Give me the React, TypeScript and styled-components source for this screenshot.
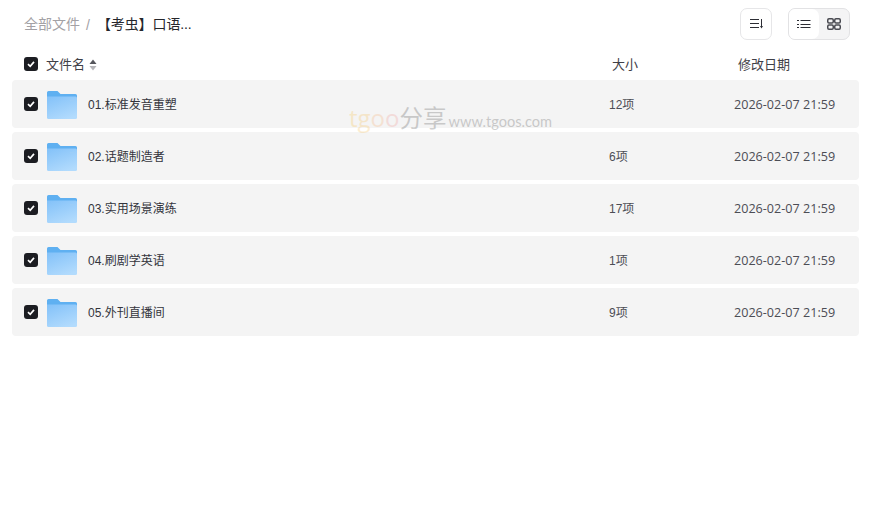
import styled, { createGlobalStyle } from "styled-components";

const FILES = [
    { name: "01.标准发音重塑", count: "12项" },
    { name: "02.话题制造者", count: "6项" },
    { name: "03.实用场景演练", count: "17项" },
    { name: "04.刷剧学英语", count: "1项" },
    { name: "05.外刊直播间", count: "9项" },
];
const MODIFIED = "2026-02-07 21:59";

const Check = () => (
    <CheckBox>
        <svg width="10" height="10" viewBox="0 0 10 10" fill="none">
            <path d="M2 5.2 4.2 7.3 8 2.9" stroke="#fff" strokeWidth="1.7" />
        </svg>
    </CheckBox>
);

const Folder = () => (
    <FolderIcon width="30" height="28" viewBox="0 0 30 28">
        <defs>
            <linearGradient id="folderFront" x1="0.2" y1="0" x2="0.7" y2="1">
                <stop offset="0" stopColor="#86c3f9" />
                <stop offset="1" stopColor="#b2dbfd" />
            </linearGradient>
        </defs>
        <path d="M0 1.5Q0 0 1.5 0H10.5L13.5 3H28.5Q30 3 30 4.5V10H0Z" fill="#5fb0f1" />
        <path d="M0 5.5H28.5Q30 5.5 30 7V26.5Q30 28 28.5 28H1.5Q0 28 0 26.5Z" fill="url(#folderFront)" />
        <rect x="23" y="9" width="4" height="1.5" fill="#9ccdf8" />
    </FolderIcon>
);

const App = () => {
    return (
        <Page>
            <GlobalStyle />
            <TopBar>
                <Crumbs>
                    <CrumbLink>全部文件</CrumbLink>
                    <CrumbSlash>/</CrumbSlash>
                    <CrumbCurrent>【考虫】口语...</CrumbCurrent>
                </Crumbs>
                <Tools>
                    <SortButton>
                        <svg width="14" height="12" viewBox="0 0 14 12" fill="none" stroke="#2c2d34" strokeWidth="1">
                            <path d="M1 1.5H10M1 5.5H10M1 9.5H10" />
                            <path d="M12.5 1V8" />
                            <path d="M11 8H14L12.5 10.5Z" fill="#2c2d34" stroke="none" />
                        </svg>
                    </SortButton>
                    <ViewSwitch>
                        <ViewOption $active>
                            <svg width="14" height="10" viewBox="0 0 14 10" fill="none" stroke="#2c2d34" strokeWidth="1">
                                <path d="M3.5 1.5H13.5M3.5 5.5H13.5M3.5 8.5H13.5" />
                                <path d="M0 1.5H2M0 5.5H2M0 8.5H2" />
                            </svg>
                        </ViewOption>
                        <ViewOption>
                            <svg width="14" height="12" viewBox="0 0 14 12" fill="none" stroke="#4a4b52" strokeWidth="1.5">
                                <rect x="0.75" y="0.75" width="5.5" height="4.3" rx="1.2" />
                                <rect x="7.75" y="0.75" width="5.5" height="4.3" rx="1.2" />
                                <rect x="0.75" y="6.95" width="5.5" height="4.3" rx="1.2" />
                                <rect x="7.75" y="6.95" width="5.5" height="4.3" rx="1.2" />
                            </svg>
                        </ViewOption>
                    </ViewSwitch>
                </Tools>
            </TopBar>

            <HeaderRow>
                <NameHead>
                    <Check />
                    <NameLabel>文件名</NameLabel>
                    <SortCaret>
                        <svg width="8" height="12" viewBox="0 0 8 12">
                            <path d="M4 0.5 7.5 5H0.5Z" fill="#55565c" />
                            <path d="M4 11.5 0.5 7H7.5Z" fill="#b4b4b8" />
                        </svg>
                    </SortCaret>
                </NameHead>
                <HeadLabel>大小</HeadLabel>
                <HeadLabel>修改日期</HeadLabel>
            </HeaderRow>

            <List>
                {FILES.map((file) => (
                    <FileRow key={file.name}>
                        <NameCell>
                            <Check />
                            <Folder />
                            <FileName>{file.name}</FileName>
                        </NameCell>
                        <Meta>{file.count}</Meta>
                        <DateText>{MODIFIED}</DateText>
                    </FileRow>
                ))}
                <Watermark>
                    <MarkBrand>
                        <i>t</i>
                        <i>g</i>
                        <i>o</i>
                        <i>o</i>
                    </MarkBrand>
                    <MarkCn>分享</MarkCn>
                    <MarkUrl>www.tgoos.com</MarkUrl>
                </Watermark>
            </List>
        </Page>
    );
};

const GlobalStyle = createGlobalStyle`
    html, body {
        margin: 0;
        background: #fff;
    }
    body {
        font-family: "Liberation Sans", "Noto Sans CJK SC", sans-serif;
        color: #33343c;
    }
`;
const Page = styled.div`
    width: 874px;
    height: 514px;
    overflow: hidden;
    box-sizing: border-box;
    padding: 0 15px 0 12px;
`;
const TopBar = styled.div`
    height: 48px;
    display: flex;
    align-items: center;
    justify-content: space-between;
    padding: 0 9px 0 12px;
`;
const Crumbs = styled.div`
    display: flex;
    align-items: center;
    font-size: 14px;
    line-height: 20px;
`;
const CrumbLink = styled.span`
    color: #a3a1a5;
`;
const CrumbSlash = styled.span`
    color: #a3a1a5;
    margin: 2px 7px 0 6px;
`;
const CrumbCurrent = styled.span`
    color: #25262b;
    letter-spacing: -0.1px;
`;
const Tools = styled.div`
    display: flex;
    align-items: center;
    gap: 16px;
`;
const SortButton = styled.div`
    width: 30px;
    height: 30px;
    border: 1px solid #e6e6e8;
    border-radius: 7px;
    display: flex;
    align-items: center;
    justify-content: center;
`;
const ViewSwitch = styled.div`
    display: flex;
    height: 30px;
    border: 1px solid #e2e2e4;
    border-radius: 7px;
    overflow: hidden;
    background: #f4f4f5;
`;
const ViewOption = styled.div<{ $active?: boolean }>`
    width: 30px;
    display: flex;
    align-items: center;
    justify-content: center;
    background: ${(props) => (props.$active ? "#fff" : "transparent")};
    border-radius: ${(props) => (props.$active ? "0 7px 7px 0" : "0")};
`;
const HeaderRow = styled.div`
    height: 32px;
    display: grid;
    grid-template-columns: 600px 126px 1fr;
    align-items: center;
`;
const NameHead = styled.div`
    display: flex;
    align-items: center;
    padding-left: 12px;
`;
const HeadLabel = styled.span`
    color: #3f4047;
    font-size: 13px;
    line-height: 18px;
    margin-top: 2px;
`;
const NameLabel = styled(HeadLabel)`
    margin-left: 8px;
`;
const SortCaret = styled.span`
    display: flex;
    margin: 2px 0 0 4px;
`;
const CheckBox = styled.span`
    width: 14px;
    height: 14px;
    flex: none;
    border-radius: 3px;
    background: #1c1d22;
    display: flex;
    align-items: center;
    justify-content: center;
`;
const List = styled.div`
    position: relative;
    display: flex;
    flex-direction: column;
    gap: 4px;
`;
const FileRow = styled.div`
    height: 48px;
    display: grid;
    grid-template-columns: 597px 125px 1fr;
    align-items: center;
    background: #f4f4f4;
    border-radius: 4px;
`;
const NameCell = styled.div`
    display: flex;
    align-items: center;
    padding-left: 12px;
    gap: 9px;
`;
const FolderIcon = styled.svg`
    flex: none;
    margin-top: 2px;
`;
const FileName = styled.span`
    font-size: 12px;
    line-height: 18px;
    color: #33343c;
    margin: 2px 0 0 2px;
`;
const Meta = styled.span`
    font-size: 12px;
    line-height: 18px;
    color: #4c4d55;
    margin-top: 2px;
`;
const DateText = styled(Meta)`
    font-family: "Open Sans", "Noto Sans CJK SC", sans-serif;
    font-size: 12.6px;
`;
const Watermark = styled.div`
    position: absolute;
    left: 337px;
    top: 20px;
    display: flex;
    align-items: baseline;
    opacity: 0.27;
    pointer-events: none;
`;
const MarkBrand = styled.span`
    font-size: 24px;
    font-family: "Open Sans", sans-serif;
    i {
        font-style: normal;
    }
    i:nth-child(1) {
        color: #f5c451;
    }
    i:nth-child(2) {
        color: #f6c05a;
    }
    i:nth-child(3) {
        color: #f4b27a;
    }
    i:nth-child(4) {
        color: #f09a94;
    }
`;
const MarkCn = styled.span`
    font-size: 23.5px;
    color: #555;
`;
const MarkUrl = styled.span`
    font-size: 14.6px;
    color: #555;
    margin-left: 2px;
    font-family: "Lato", sans-serif;
`;

export default App;
